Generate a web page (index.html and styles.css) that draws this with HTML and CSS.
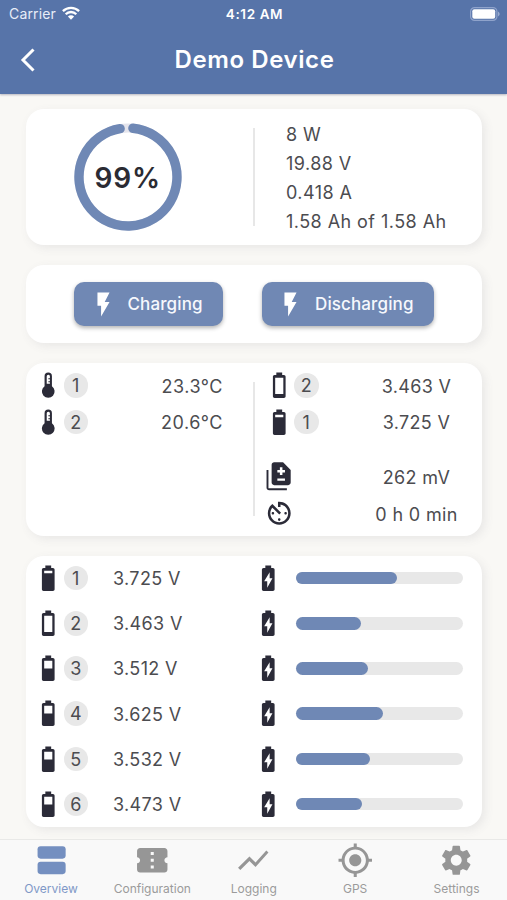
FILE: index.html
```html
<!DOCTYPE html>
<html lang="en">
<head>
<meta charset="utf-8">
<title>Demo Device</title>
<link rel="stylesheet" href="styles.css">
</head>
<body>
<svg class="defs" aria-hidden="true">
  <symbol id="battery-high" viewBox="0 0 24 24"><path fill-rule="evenodd" d="M15.67 4H14.3V2H9.7v2H8.33C7.6 4 7 4.6 7 5.33v15.33C7 21.4 7.6 22 8.33 22h7.33c.74 0 1.34-.6 1.34-1.33V5.33C17 4.6 16.4 4 15.67 4zM8.8 6h6.4v2H8.8z"/></symbol>
  <symbol id="battery-mid" viewBox="0 0 24 24"><path fill-rule="evenodd" d="M15.67 4H14.3V2H9.7v2H8.33C7.6 4 7 4.6 7 5.33v15.33C7 21.4 7.6 22 8.33 22h7.33c.74 0 1.34-.6 1.34-1.33V5.33C17 4.6 16.4 4 15.67 4zM8.8 6h6.4v6.2H8.8z"/></symbol>
  <symbol id="battery-low" viewBox="0 0 24 24"><path fill-rule="evenodd" d="M15.67 4H14.3V2H9.7v2H8.33C7.6 4 7 4.6 7 5.33v15.33C7 21.4 7.6 22 8.33 22h7.33c.74 0 1.34-.6 1.34-1.33V5.33C17 4.6 16.4 4 15.67 4zM8.8 6h6.4v12.8H8.8z"/></symbol>
  <symbol id="battery-bolt" viewBox="0 0 24 24"><path fill-rule="evenodd" d="M15.67 4H14.3V2H9.7v2H8.33C7.6 4 7 4.6 7 5.33v15.33C7 21.4 7.6 22 8.33 22h7.33c.74 0 1.34-.6 1.34-1.33V5.33C17 4.6 16.4 4 15.67 4zM13.1 7.3L8.8 14.4h2.4v5l4.1-7.4h-2.2z"/></symbol>
  <symbol id="thermometer" viewBox="0 0 24 24"><path fill-rule="evenodd" d="M12 2a2.900 2.900 0 0 0-2.900 2.900v7.900a5 5 0 1 0 5.800 0V4.900A2.900 2.900 0 0 0 12 2zM12 3.800a1.200 1.200 0 0 0-1.200 1.200V10.800h2.500V9.700H12.100v-.9h1.200V7.300H12.100v-.9h1.200V5A1.200 1.200 0 0 0 12 3.800z"/></symbol>
  <symbol id="flash" viewBox="0 0 24 24"><path d="M7 2v11h3v9l7-12h-4l4-8z"/></symbol>
</svg>

<header class="header">
  <div class="status">
    <div class="carrier">Carrier
      <svg class="wifi" viewBox="0 0 18 14"><g fill="none" stroke="#fff" stroke-width="2.3"><path d="M.9 5.100a11.600 11.600 0 0 1 16.200 0"/><path d="M3.700 8.200a7.500 7.500 0 0 1 10.600 0"/></g><path fill="#fff" d="M9 13.700L5.900 10.500a4.400 4.400 0 0 1 6.200 0z"/></svg>
    </div>
    <div class="clock">4:12 AM</div>
    <svg class="power" viewBox="0 0 30 14"><rect x=".6" y=".6" width="26.300" height="12.800" rx="4" fill="none" stroke="#8fa3cb" stroke-width="1.200"/><rect x="2.300" y="2.300" width="22.900" height="9.400" rx="2" fill="#fff"/><path d="M28.200 4.500q2.800 2.500 0 5z" fill="#a9b8d8"/></svg>
  </div>
  <div class="navbar">
    <svg class="back" viewBox="0 0 16 26"><path d="M13.500 2.500L3 13l10.500 10.500" fill="none" stroke="#fff" stroke-width="3"/></svg>
    <h1>Demo Device</h1>
  </div>
</header>

<main>
  <section class="card summary">
    <div class="gauge">
      <svg viewBox="0 0 108 108"><circle cx="54" cy="54" r="49" fill="none" stroke="#e4e4ec" stroke-width="9"/><path d="M58.900 5.250A49 49 0 1 1 46.100 5.640" fill="none" stroke="#6f88b5" stroke-width="9.400" stroke-linecap="round"/></svg>
      <span class="percent">99%</span>
    </div>
    <div class="rule"></div>
    <div class="readings"><div>8 W</div><div>19.88 V</div><div>0.418 A</div><div>1.58 Ah of 1.58 Ah</div></div>
  </section>

  <section class="card actions">
    <button class="charge"><svg><use href="#flash"/></svg><span>Charging</span></button>
    <button class="discharge"><svg><use href="#flash"/></svg><span>Discharging</span></button>
  </section>

  <section class="card details">
    <div class="temps">
      <div class="stat"><svg><use href="#thermometer"/></svg><b>1</b><span>23.3°C</span></div>
      <div class="stat"><svg><use href="#thermometer"/></svg><b>2</b><span>20.6°C</span></div>
    </div>
    <div class="rule"></div>
    <div class="volts">
      <div class="stat"><svg><use href="#battery-low"/></svg><b>2</b><span>3.463 V</span></div>
      <div class="stat"><svg><use href="#battery-high"/></svg><b>1</b><span>3.725 V</span></div>
      <div class="stat diff"><svg viewBox="0 0 24 24"><path d="M18 23H4c-1.100 0-2-.9-2-2V7h1.500v14.500H18zM15 1H8C6.900 1 6.010 1.900 6.010 3L6 17c0 1.100.89 2 1.990 2H19c1.100 0 2-.9 2-2V7zM16.500 15.500h-6v-1.700h6zM16.500 9h-2v2h-2V9h-2V7h2V5h2v2h2z"/></svg><span>262 mV</span></div>
      <div class="stat"><svg viewBox="0 0 24 24"><path d="M11 17c0 .55.45 1 1 1s1-.45 1-1-.45-1-1-1-1 .45-1 1zm0-14v4h2V5.080c3.390.49 6 3.390 6 6.920 0 3.870-3.130 7-7 7s-7-3.130-7-7c0-1.680.59-3.220 1.580-4.420L12 13l1.410-1.410-6.800-6.800v.02C4.420 6.450 3 9.050 3 12c0 4.970 4.020 9 9 9 4.970 0 9-4.030 9-9s-4.030-9-9-9h-1zm7 9c0-.55-.45-1-1-1s-1 .45-1 1 .45 1 1 1 1-.45 1-1zM6 12c0 .55.45 1 1 1s1-.45 1-1-.45-1-1-1-1 .45-1 1z"/></svg><span>0 h 0 min</span></div>
    </div>
  </section>

  <section class="card cells">
    <div class="cell"><svg><use href="#battery-high"/></svg><b>1</b><span>3.725 V</span><svg><use href="#battery-bolt"/></svg><div class="bar"><i style="width:60.4%"></i></div></div>
    <div class="cell"><svg><use href="#battery-low"/></svg><b>2</b><span>3.463 V</span><svg><use href="#battery-bolt"/></svg><div class="bar"><i style="width:38.6%"></i></div></div>
    <div class="cell"><svg><use href="#battery-mid"/></svg><b>3</b><span>3.512 V</span><svg><use href="#battery-bolt"/></svg><div class="bar"><i style="width:42.8%"></i></div></div>
    <div class="cell"><svg><use href="#battery-mid"/></svg><b>4</b><span>3.625 V</span><svg><use href="#battery-bolt"/></svg><div class="bar"><i style="width:52.1%"></i></div></div>
    <div class="cell"><svg><use href="#battery-mid"/></svg><b>5</b><span>3.532 V</span><svg><use href="#battery-bolt"/></svg><div class="bar"><i style="width:44.3%"></i></div></div>
    <div class="cell"><svg><use href="#battery-mid"/></svg><b>6</b><span>3.473 V</span><svg><use href="#battery-bolt"/></svg><div class="bar"><i style="width:39.4%"></i></div></div>
  </section>
</main>

<nav class="tabs">
  <div class="tab active"><svg viewBox="0 0 36 36"><rect x="4.500" y="4.100" width="27.700" height="12.300" rx="3"/><rect x="4.500" y="19.400" width="27.700" height="12.300" rx="3"/></svg><span>Overview</span></div>
  <div class="tab"><svg viewBox="0 0 24 24"><path d="M22 10V6c0-1.110-.9-2-2-2H4c-1.100 0-1.990.89-1.990 2v4c1.100 0 1.990.9 1.990 2s-.89 2-2 2v4c0 1.100.9 2 2 2h16c1.100 0 2-.9 2-2v-4c-1.100 0-2-.9-2-2s.9-2 2-2zm-9 7.500h-2v-2h2v2zm0-4.500h-2v-2h2v2zm0-4.500h-2v-2h2v2z"/></svg><span>Configuration</span></div>
  <div class="tab"><svg viewBox="0 0 24 24"><path d="M3.500 18.490l6-6.010 4 4L22 6.920l-1.410-1.410-7.090 7.970-4-4L2 16.990z"/></svg><span>Logging</span></div>
  <div class="tab"><svg viewBox="0 0 24 24"><path d="M12 8c-2.210 0-4 1.790-4 4s1.790 4 4 4 4-1.790 4-4-1.790-4-4-4zm8.940 3c-.46-4.170-3.770-7.480-7.940-7.940V1h-2v2.060C6.830 3.520 3.520 6.830 3.060 11H1v2h2.060c.46 4.170 3.770 7.480 7.940 7.940V23h2v-2.060c4.170-.46 7.480-3.770 7.940-7.940H23v-2h-2.060zM12 19c-3.870 0-7-3.130-7-7s3.130-7 7-7 7 3.130 7 7-3.130 7-7 7z"/></svg><span>GPS</span></div>
  <div class="tab"><svg viewBox="0 0 24 24"><path d="M19.140 12.940c.04-.3.06-.61.06-.94 0-.32-.02-.64-.07-.94l2.030-1.580c.18-.14.23-.41.12-.61l-1.920-3.320c-.12-.22-.37-.29-.59-.22l-2.390.96c-.5-.38-1.030-.7-1.620-.94l-.36-2.540c-.04-.24-.24-.41-.48-.41h-3.840c-.24 0-.43.17-.47.41l-.36 2.540c-.59.24-1.130.57-1.620.94l-2.390-.96c-.22-.08-.47 0-.59.22L2.740 8.870c-.12.21-.08.47.12.61l2.030 1.580c-.05.3-.09.63-.09.94s.02.64.07.94l-2.030 1.580c-.18.14-.23.41-.12.61l1.920 3.320c.12.22.37.29.59.22l2.390-.96c.5.38 1.030.7 1.620.94l.36 2.540c.05.24.24.41.48.41h3.840c.24 0 .44-.17.47-.41l.36-2.540c.59-.24 1.130-.56 1.620-.94l2.390.96c.22.08.47 0 .59-.22l1.920-3.320c.12-.22.07-.47-.12-.61l-2.010-1.580zM12 15.600c-1.980 0-3.600-1.620-3.600-3.600s1.620-3.600 3.600-3.600 3.600 1.620 3.600 3.600-1.620 3.600-3.600 3.600z"/></svg><span>Settings</span></div>
</nav>
</body>
</html>
```
FILE: styles.css
```css
* { box-sizing: border-box; }
body {
  margin: 0;
  height: 900px;
  display: flex;
  flex-direction: column;
  overflow: hidden;
  background: #f9f8f5;
  color: #4c4c50;
  font: 18px/1 Inter, "Noto Sans", sans-serif;
}
svg { display: block; flex: none; }
.defs { display: none; }

.header {
  height: 94px;
  flex: none;
  background: #5774a9;
  color: #fff;
  box-shadow: 0 1px 2px rgba(60, 60, 90, .35);
}
.status {
  height: 27px;
  padding: 0 7px 0 9px;
  display: grid;
  grid-template-columns: 1fr auto 1fr;
  align-items: center;
  font-size: 14px;
}
.carrier { display: flex; align-items: center; gap: 6px; color: #e8edf8; letter-spacing: .15px; }
.wifi { width: 18px; height: 14px; margin-top: -1px; }
.clock { font-weight: 600; font-size: 13.5px; letter-spacing: .6px; padding-top: 2px; }
.power { width: 30px; height: 14px; justify-self: end; }
.navbar {
  height: 66px;
  padding: 0 18px 0 20px;
  display: grid;
  grid-template-columns: 16px 1fr 16px;
  align-items: center;
}
.back { width: 16px; height: 26px; }
h1 { margin: 0; text-align: center; font-size: 24px; font-weight: 600; letter-spacing: .6px; }

main {
  flex: 1;
  min-height: 0;
  padding: 15px 25px 0 26px;
  display: flex;
  flex-direction: column;
  gap: 20px;
}
.card {
  flex: none;
  background: #fff;
  border-radius: 18px;
  box-shadow: 3px 3px 10px rgba(90, 90, 110, .1);
  letter-spacing: .35px;
}
.rule { width: 2px; background: #e7e7e7; }

.summary {
  height: 136px;
  display: grid;
  grid-template-columns: 227px 2px 1fr;
}
.gauge { display: grid; place-items: center; padding: 0 23.5px 1px 0; }
.gauge svg, .gauge .percent { grid-area: 1 / 1; }
.gauge svg { width: 108px; height: 108px; }
.percent { padding-top: 3px; font-size: 28px; font-weight: 600; color: #2b2b33; letter-spacing: .9px; }
.summary .rule { margin: 19px 0; }
.readings { padding: 12px 0 0 31px; line-height: 28.9px; letter-spacing: .45px; }

.actions { height: 78px; display: flex; gap: 38.5px; padding: 17px 0 0 48px; }
button {
  height: 44px;
  padding: 0 0 0 14.5px;
  display: flex;
  align-items: center;
  gap: 10px;
  border: 0;
  border-radius: 10px;
  background: #7088b4;
  color: #f6f8fd;
  font: 500 17px/1 Inter, "Noto Sans", sans-serif;
  letter-spacing: .12px;
  box-shadow: 0 2px 4px rgba(0, 0, 0, .3);
}
button svg { width: 29px; height: 29px; fill: #fff; }
.charge { width: 149px; }
.discharge { width: 172.5px; }

b {
  width: 24.5px;
  height: 24.5px;
  border-radius: 50%;
  background: #e8e8e8;
  font-weight: 400;
  line-height: 25px;
  text-align: center;
  letter-spacing: 0;
}
.details {
  height: 173px;
  margin-top: -.5px;
  display: grid;
  grid-template-columns: 227px 2px 1fr;
}
.details .rule { margin: 19px 0 20px; }
.temps { padding: 4.5px 30px 0 7px; letter-spacing: .5px; }
.volts { padding: 4.5px 0 0 8.5px; }
.stat { height: 36.6px; display: flex; align-items: center; }
.stat svg, .cell svg { width: 30.5px; height: 30.5px; fill: #2b2b38; }
.stat span { margin-left: auto; padding-top: 3px; }
.volts .stat span { width: 131px; text-align: center; }
.diff { margin-top: 18px; }

.cells { height: 271px; }
.cell {
  height: 45.2px;
  display: grid;
  grid-template-columns: 30.5px 24.5px 165.3px 30.5px 166.7px;
  align-items: center;
  padding-left: 7px;
}
.cell span { padding: 2px 0 0 25px; }
.cell .bar { margin: 0 -12.5px 0 12.5px; }
.bar { height: 12.5px; border-radius: 7px; background: #e8e8e8; }
.bar i { display: block; height: 100%; border-radius: 7px; background: #6f88b5; }

.tabs {
  height: 61px;
  flex: none;
  display: grid;
  grid-template-columns: repeat(5, 1fr);
  background: #f9f9f9;
  border-top: 1px solid #e9e9e7;
}
.tab {
  display: flex;
  flex-direction: column;
  align-items: center;
  padding: 1.5px 0 0 .5px;
  fill: #969696;
  color: #9b9b9b;
  font-size: 12px;
}
.tab svg { width: 36.5px; height: 36.5px; }
.tab span { margin-top: 4.5px; }
.active { fill: #748fc0; color: #7f98c7; }
```
